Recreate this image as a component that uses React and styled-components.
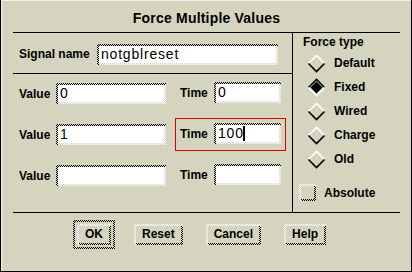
import React from 'react'
import styled, { createGlobalStyle } from 'styled-components'

const BG = '#d5d5bf'
const darkChecker = `repeating-conic-gradient(#000 0 25%, ${BG} 0 50%) 0 0 / 2px 2px`
const lightChecker = `repeating-conic-gradient(#fff 0 25%, ${BG} 0 50%) 0 0 / 2px 2px`

const Global = createGlobalStyle`
    body {
        margin: 0;
        background: ${BG};
    }
`

const Diamond = ({ on }) => (
    <DiamondSvg width="19" height="19" viewBox="0 0 19 19">
        <polyline points="1.5,9.5 9.5,1.5 17.5,9.5" fill="none" stroke={on ? '#000' : '#fff'} strokeWidth="1.6" />
        <polyline points="1.5,9.5 9.5,17.5 17.5,9.5" fill="none" stroke={on ? '#fff' : '#000'} strokeWidth="1.6" />
        {on && <polygon points="3.5,9.5 9.5,3.5 15.5,9.5 9.5,15.5" fill="#000" />}
    </DiamondSvg>
)

const TextField = ({ width, value, caret }) => (
    <Field $w={width}>
        <Entry>
            {value}
            {caret && <Caret />}
        </Entry>
    </Field>
)

const PushButton = ({ label, isDefault }) => (
    <Ring $on={isDefault}>
        <ButtonFrame>
            <ButtonFace>{label}</ButtonFace>
        </ButtonFrame>
    </Ring>
)

const rows = [
    { value: '0', time: '0' },
    { value: '1', time: '100', focused: true },
    { value: '', time: '' },
]

const forceTypes = ['Default', 'Fixed', 'Wired', 'Charge', 'Old']

const App = () => {
    return (
        <Window>
            <Global />
            <Title>Force Multiple Values</Title>
            <Body>
                <LeftPanel>
                    <SignalRow>
                        <Label $w={78}>Signal name</Label>
                        <TextField width={181} value="notgblreset" />
                    </SignalRow>
                    <ValueRows>
                        {rows.map((r, i) => (
                            <ValueRow key={i}>
                                <Label $w={37}>Value</Label>
                                <TextField width={110} value={r.value} />
                                <TimeCell $focused={r.focused}>
                                    <Label $w={34}>Time</Label>
                                    <TextField width={67} value={r.time} caret={r.focused} />
                                </TimeCell>
                            </ValueRow>
                        ))}
                    </ValueRows>
                </LeftPanel>
                <RightPanel>
                    <GroupTitle>Force type</GroupTitle>
                    <RadioList>
                        {forceTypes.map(t => (
                            <RadioRow key={t}>
                                <Diamond on={t === 'Fixed'} />
                                <span>{t}</span>
                            </RadioRow>
                        ))}
                    </RadioList>
                    <CheckRow>
                        <CheckFrame>
                            <CheckFace />
                        </CheckFrame>
                        <span>Absolute</span>
                    </CheckRow>
                </RightPanel>
            </Body>
            <Footer>
                <PushButton label="OK" isDefault />
                <PushButton label="Reset" />
                <PushButton label="Cancel" />
                <PushButton label="Help" />
            </Footer>
        </Window>
    )
}

const Window = styled.div`
    width: 412px;
    height: 272px;
    box-sizing: border-box;
    background: ${BG};
    border: 1px solid #000;
    border-top: none;
    box-shadow: inset 1px 1px 0 #f2f2e6;
    padding: 0 11px 0 12px;
    display: flex;
    flex-direction: column;
    font-family: "Liberation Sans", Arial, sans-serif;
    color: #000;
`

const Title = styled.div`
    height: 33px;
    box-sizing: border-box;
    border-bottom: 1px solid #000;
    padding-top: 10px;
    text-align: center;
    font-size: 14px;
    line-height: 16px;
    font-weight: bold;
    letter-spacing: 0.2px;
`

const Body = styled.div`
    display: flex;
    height: 179px;
`

const LeftPanel = styled.div`
    width: 280px;
    box-sizing: border-box;
    border-right: 1px solid #000;
    display: flex;
    flex-direction: column;
`

const SignalRow = styled.div`
    height: 41px;
    box-sizing: border-box;
    border-bottom: 1px solid #000;
    padding: 2px 0 0 6px;
    display: flex;
    align-items: center;
`

const Label = styled.span`
    width: ${p => p.$w}px;
    flex-shrink: 0;
    font-size: 12px;
    font-weight: bold;
`

const ValueRows = styled.div`
    display: flex;
    flex-direction: column;
    gap: 8px;
    padding-top: 3px;
`

const ValueRow = styled.div`
    height: 33px;
    display: flex;
    align-items: center;
    padding-left: 6px;
`

const TimeCell = styled.div`
    margin-left: 9px;
    display: flex;
    align-items: center;
    border: 1px solid ${p => (p.$focused ? '#e00000' : 'transparent')};
    padding: 4px 4px 6px 4px;
`

const Field = styled.div`
    width: ${p => p.$w}px;
    height: 21px;
    box-sizing: border-box;
    flex-shrink: 0;
    padding: 2px 0 0 2px;
    background: ${darkChecker};
`

const Entry = styled.div`
    height: 100%;
    box-sizing: border-box;
    border: solid transparent;
    border-width: 0 2px 2px 0;
    background: linear-gradient(#fff, #fff) padding-box, ${lightChecker} border-box;
    padding: 0 2px;
    display: flex;
    align-items: center;
    font-size: 14px;
    line-height: 17px;
    letter-spacing: 0.8px;
    white-space: nowrap;
    overflow: hidden;
`

const Caret = styled.span`
    display: inline-block;
    width: 2px;
    height: 15px;
    margin-left: -1px;
    background: #000;
`

const RightPanel = styled.div`
    flex: 1;
    padding-top: 2px;
    display: flex;
    flex-direction: column;
    font-size: 12px;
    font-weight: bold;
`

const GroupTitle = styled.div`
    padding-left: 10px;
    line-height: 14px;
`

const RadioList = styled.div`
    margin-top: 2px;
    display: flex;
    flex-direction: column;
`

const RadioRow = styled.div`
    height: 24px;
    display: flex;
    align-items: center;
    gap: 8px;
    padding-left: 14px;
`

const DiamondSvg = styled.svg`
    flex-shrink: 0;
    display: block;
`

const CheckRow = styled.div`
    margin-top: 13px;
    height: 17px;
    display: flex;
    align-items: center;
    gap: 8px;
    padding-left: 6px;
`

const CheckFrame = styled.div`
    width: 17px;
    height: 17px;
    box-sizing: border-box;
    padding: 2px 0 0 2px;
    background: ${lightChecker};
`

const CheckFace = styled.div`
    height: 100%;
    box-sizing: border-box;
    border: solid transparent;
    border-width: 0 2px 2px 0;
    background: linear-gradient(${BG}, ${BG}) padding-box, ${darkChecker} border-box;
`

const Footer = styled.div`
    flex: 1;
    border-top: 1px solid #000;
    display: flex;
    align-items: flex-start;
    gap: 15px;
    padding: 7px 0 0 60px;
`

const Ring = styled.div`
    padding: 2px;
    border: 2px solid transparent;
    background: ${p => (p.$on ? `linear-gradient(${BG}, ${BG}) padding-box, ${darkChecker} border-box` : 'none')};
`

const ButtonFrame = styled.div`
    height: 21px;
    box-sizing: border-box;
    padding: 2px 0 0 2px;
    background: ${lightChecker};
`

const ButtonFace = styled.div`
    height: 100%;
    box-sizing: border-box;
    border: solid transparent;
    border-width: 0 2px 2px 0;
    background: linear-gradient(${BG}, ${BG}) padding-box, ${darkChecker} border-box;
    padding: 0 6px;
    font-size: 12px;
    line-height: 17px;
    font-weight: bold;
    text-align: center;
`

export default App
